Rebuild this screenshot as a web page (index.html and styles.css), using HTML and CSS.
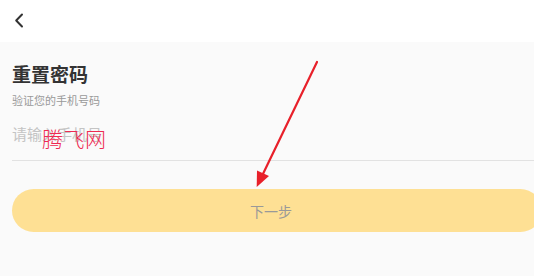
FILE: index.html
```html
<!DOCTYPE html>
<html lang="zh">
<head>
<meta charset="utf-8">
<link rel="stylesheet" href="styles.css">
</head>
<body>
<div class="page">
  <header class="topbar">
    <svg class="back" width="10" height="15" viewBox="0 0 10 15"><path d="M8 1.5 L2.2 7.5 L8 13.5" fill="none" stroke="#333" stroke-width="2" stroke-linecap="round" stroke-linejoin="round"/></svg>
  </header>
  <main class="content">
    <h1 class="title">重置密码</h1>
    <p class="subtitle">验证您的手机号码</p>
    <div class="field">
      <span class="placeholder">请输入手机号</span>
      <span class="watermark">腾飞网</span>
    </div>
    <button class="next">下一步</button>
  </main>
  <svg class="arrow" width="534" height="276" viewBox="0 0 534 276">
    <line x1="317" y1="62" x2="261" y2="178" stroke="#e8202a" stroke-width="2.2" stroke-linecap="round"/>
    <polygon points="256.7,187 257,170.5 269,176" fill="#e8202a"/>
  </svg>
</div>
</body>
</html>
```
FILE: styles.css
```css
html, body {
  margin: 0;
  padding: 0;
  background: #fafafa;
  font-family: "Noto Sans CJK SC", "Noto Sans", sans-serif;
}
.page {
  position: relative;
  width: 534px;
  height: 276px;
  overflow: hidden;
}
.topbar {
  height: 42px;
  background: #ffffff;
  display: flex;
  align-items: center;
  padding-left: 14px;
}
.back {
  display: block;
  margin-top: -2px;
}
.content {
  padding: 18px 0 0 12px;
}
.title {
  margin: 0;
  font-size: 19px;
  line-height: 28px;
  font-weight: 700;
  color: #333333;
}
.subtitle {
  margin: 4px 0 0;
  font-size: 11px;
  line-height: 16px;
  color: #999999;
}
.field {
  position: relative;
  margin-top: 15px;
  height: 37px;
  border-bottom: 1px solid #e2e2e2;
  display: flex;
  align-items: flex-start;
}
.placeholder {
  font-size: 15px;
  line-height: 22px;
  color: #c4c4c4;
}
.watermark {
  position: absolute;
  left: 30px;
  top: 3px;
  font-size: 21px;
  line-height: 24px;
  font-weight: 300;
  color: #ee2a52;
  letter-spacing: 0.5px;
}
.next {
  display: flex;
  align-items: center;
  justify-content: center;
  margin-top: 28px;
  width: 530px;
  height: 43px;
  border: none;
  border-radius: 22px;
  background: #fee094;
  color: #999999;
  font-family: inherit;
  font-size: 14px;
  padding: 0 12px 0 0;
}
.arrow {
  position: absolute;
  left: 0;
  top: 0;
  pointer-events: none;
}
```
